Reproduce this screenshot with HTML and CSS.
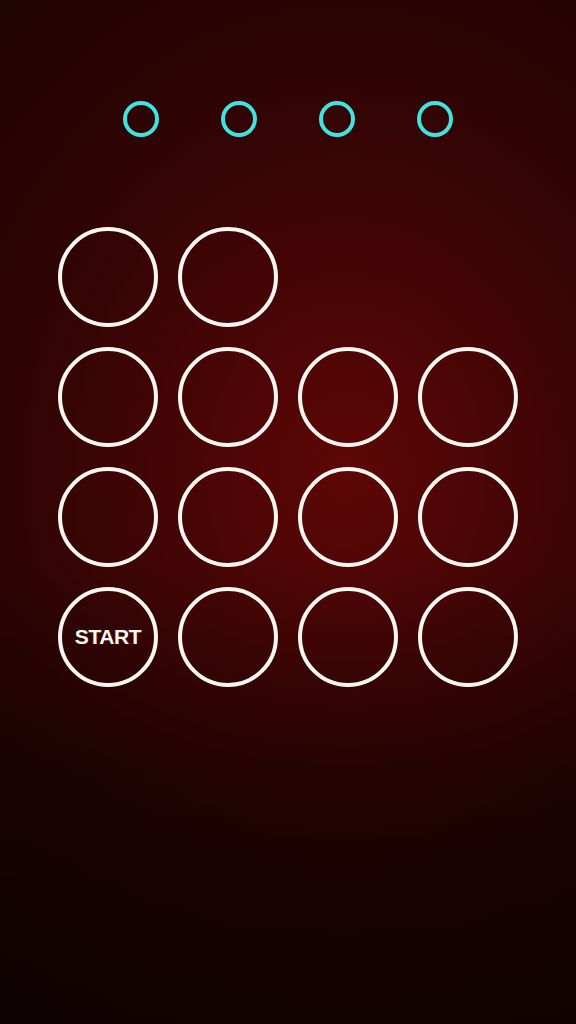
FILE: index.html
```html
<!DOCTYPE html>
<html lang="en">
  <head>
    <meta charset="UTF-8" />
    <title>Passcode</title>
    <link rel="stylesheet" href="styles.css">
  </head>
  <body>
    <div class="screen">
      <!-- entered code indicators -->
      <div class="dots">
        <span class="dot"></span>
        <span class="dot"></span>
        <span class="dot"></span>
        <span class="dot"></span>
      </div>

      <!-- keypad -->
      <div class="pad">
        <button class="key"></button>
        <button class="key"></button>
        <span class="blank"></span>
        <span class="blank"></span>

        <button class="key"></button>
        <button class="key"></button>
        <button class="key"></button>
        <button class="key"></button>

        <button class="key"></button>
        <button class="key"></button>
        <button class="key"></button>
        <button class="key"></button>

        <button class="key start">START</button>
        <button class="key"></button>
        <button class="key"></button>
        <button class="key"></button>
      </div>
    </div>
  </body>
</html>
```

FILE: styles.css
```css
html,
body {
  margin: 0;
  height: 100%;
}
body {
  font-family: "Liberation Sans", Arial, sans-serif;
  background-color: #160303;
  background-image:
    linear-gradient(to bottom, rgba(0, 0, 0, 0) 55%, rgba(0, 0, 0, 0.35) 75%, rgba(0, 0, 0, 0.5) 100%),
    radial-gradient(ellipse 560px 660px at 60% 46%, #5e0706 0%, #460505 30%, #2e0404 62%, #1d0303 100%);
  overflow: hidden;
}
.screen {
  height: 1024px;
  display: flex;
  flex-direction: column;
  align-items: center;
  padding-top: 101px;
  box-sizing: border-box;
}
.dots {
  display: flex;
  gap: 62px;
}
.dot {
  width: 36px;
  height: 36px;
  box-sizing: border-box;
  border: 4px solid #3fe3e0;
  border-radius: 50%;
}
.pad {
  margin-top: 90px;
  display: grid;
  grid-template-columns: repeat(4, 100px);
  grid-auto-rows: 100px;
  gap: 20px;
}
.key {
  width: 100px;
  height: 100px;
  box-sizing: border-box;
  border: 4px solid #fff8f2;
  border-radius: 50%;
  background: transparent;
  padding: 0;
  margin: 0;
  cursor: pointer;
}
.start {
  color: #fff8f2;
  font-family: "Liberation Sans", Arial, sans-serif;
  font-weight: bold;
  font-size: 21px;
  letter-spacing: -0.4px;
}
```
